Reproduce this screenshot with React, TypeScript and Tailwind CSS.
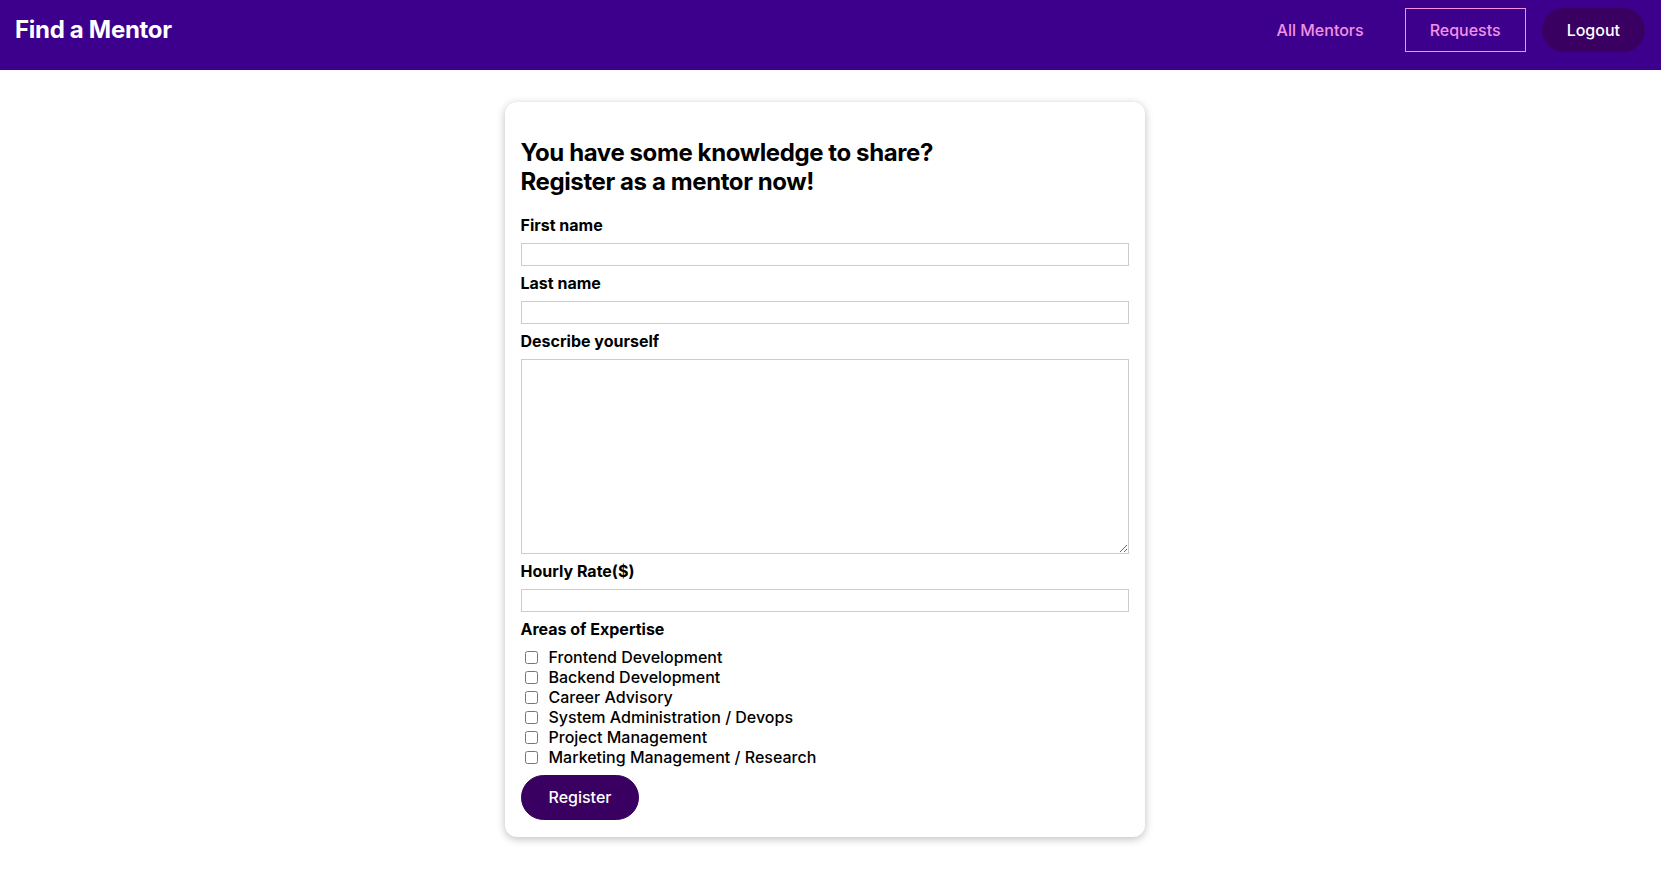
import React from "react";

const areas = [
  ["frontend", "Frontend Development"],
  ["backend", "Backend Development"],
  ["career", "Career Advisory"],
  ["sysadmin", "System Administration / Devops"],
  ["pm", "Project Management"],
  ["marketing", "Marketing Management / Research"],
];

export default function App() {
  return (
    <div className="min-h-screen bg-white text-black">
      <div className="font-['Inter','Roboto',sans-serif]">
        <header className="h-[70px] bg-[#3d008d] flex items-center justify-between pl-[15px] pr-4 pb-[10px]">
          <h1 className="text-[24px] leading-[30px] font-bold text-white tracking-[-0.3px]">
            <a href="#">Find a Mentor</a>
          </h1>
          <nav className="flex items-center gap-4">
            <a href="#" className="text-[#f391e3] px-6 py-3 border border-transparent leading-[18px] text-base font-medium">
              All Mentors
            </a>
            <a href="#" className="text-[#f391e3] px-6 py-3 border border-[#f391e3] leading-[18px] text-base font-medium">
              Requests
            </a>
            <button className="bg-[#3a0061] border border-[#3a0061] text-white px-6 py-3 rounded-[30px] leading-[18px] text-base font-medium">
              Logout
            </button>
          </nav>
        </header>

        <main className="pt-8 pb-8 pr-[12px]">
          <section className="mx-auto w-[640px] rounded-[12px] bg-white p-4 pb-[17px] shadow-[0_2px_8px_rgba(0,0,0,0.26)]">
            <h2 className="mt-5 mb-5 text-[24px] leading-[29px] font-bold tracking-[-0.4px]">
              You have some knowledge to share?
              <br />
              Register as a mentor now!
            </h2>
            <form className="flex flex-col">
              <div className="mb-2">
                <label className="block font-bold leading-[19px] mb-2 text-base">First name</label>
                <input type="text" className="block w-full h-[23px] border border-[#ccc]" />
              </div>
              <div className="mb-2">
                <label className="block font-bold leading-[19px] mb-2 text-base">Last name</label>
                <input type="text" className="block w-full h-[23px] border border-[#ccc]" />
              </div>
              <div className="mb-2">
                <label className="block font-bold leading-[19px] mb-2 text-base">Describe yourself</label>
                <textarea className="block w-full h-[195px] border border-[#ccc]" />
              </div>
              <div className="mb-2">
                <label className="block font-bold leading-[19px] mb-2 text-base">Hourly Rate($)</label>
                <input type="number" className="block w-full h-[23px] border border-[#ccc]" />
              </div>
              <div className="mb-2">
                <h3 className="font-bold leading-[19px] mb-2 text-base">Areas of Expertise</h3>
                {areas.map(([id, text]) => (
                  <div key={id} className="h-5 flex items-center">
                    <input type="checkbox" id={id} className="ml-1 w-[13px] h-[13px]" />
                    <label htmlFor={id} className="ml-[11px] text-base leading-5 font-medium">
                      {text}
                    </label>
                  </div>
                ))}
              </div>
              <div>
                <button
                  type="button"
                  className="bg-[#3a0061] border border-[#3a0061] text-white px-[27px] py-3 rounded-[30px] leading-[19px] text-base font-medium"
                >
                  Register
                </button>
              </div>
            </form>
          </section>
        </main>
      </div>
    </div>
  );
}
